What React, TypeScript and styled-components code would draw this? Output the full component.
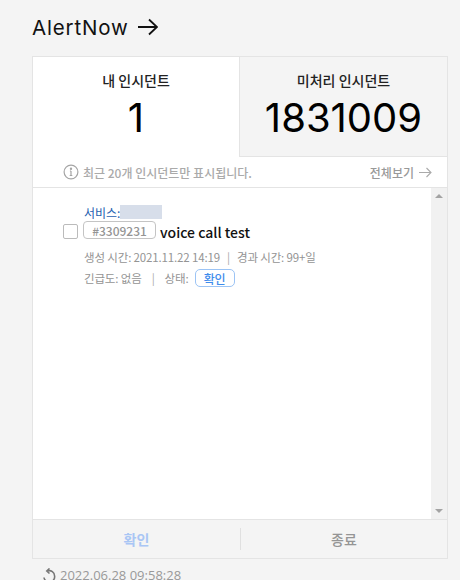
import React from "react";
import styled, { createGlobalStyle } from "styled-components";

const GlobalStyle = createGlobalStyle`
  html, body {
    margin: 0;
    padding: 0;
    height: 580px;
    overflow: hidden;
    background: #f4f4f4;
    font-family: "Noto Sans CJK KR", "Noto Sans", sans-serif;
  }
`;

const Page = styled.div`
  width: 416px;
  height: 580px;
  padding: 0 12px 0 32px;
  overflow: hidden;
`;

const Title = styled.h2`
  display: flex;
  align-items: center;
  gap: 8px;
  height: 56px;
  margin: 0;
  padding-bottom: 2px;
  box-sizing: border-box;
  font-family: Inter, sans-serif;
  font-size: 20.5px;
  font-weight: 400;
  letter-spacing: 0.85px;
  color: #111;
`;

const Card = styled.div`
  height: 503px;
  box-sizing: border-box;
  border: 1px solid #e4e4e4;
  display: flex;
  flex-direction: column;
  background: #fff;
`;

const Tabs = styled.div`
  display: grid;
  grid-template-columns: 206px 1fr;
  height: 100px;
`;

const Tab = styled.div<{ $active?: boolean }>`
  display: flex;
  flex-direction: column;
  align-items: center;
  padding-top: 12px;
  box-sizing: border-box;
  background: ${(p) => (p.$active ? "#fff" : "#f4f4f4")};
  border-left: ${(p) => (p.$active ? "none" : "1px solid #e4e4e4")};
  border-bottom: ${(p) => (p.$active ? "none" : "1px solid #e4e4e4")};
`;

const TabLabel = styled.div`
  font-size: 14px;
  line-height: 22px;
  font-weight: 500;
  color: #222;
`;

const TabCount = styled.div`
  font-family: Inter, sans-serif;
  font-size: 40px;
  line-height: 46px;
  margin-top: 4px;
  font-weight: 400;
  color: #000;
`;

const Notice = styled.div`
  display: flex;
  align-items: center;
  justify-content: space-between;
  height: 31px;
  box-sizing: border-box;
  padding: 0 15px 0 30px;
  border-bottom: 1px solid #e4e4e4;
  font-size: 12px;
  font-weight: 500;
  color: #aaa;
`;

const NoticeText = styled.span`
  display: flex;
  align-items: center;
  gap: 4px;
`;

const ViewAll = styled.span`
  display: flex;
  align-items: center;
  gap: 5px;
  color: #999;
`;

const ListArea = styled.div`
  flex: 1;
  display: flex;
  min-height: 0;
`;

const List = styled.div`
  flex: 1;
  padding: 15px 0 0 30px;
`;

const ServiceLine = styled.div`
  display: flex;
  align-items: center;
  margin-left: 21px;
  height: 18px;
  font-size: 12px;
  color: #1f5fb0;
`;

const Redacted = styled.span`
  display: inline-block;
  width: 42px;
  height: 14px;
  background: #d7deea;
`;

const HeadRow = styled.div`
  display: flex;
  align-items: center;
  height: 20px;
  margin-top: -1px;
`;

const Check = styled.span`
  box-sizing: border-box;
  width: 15px;
  height: 15px;
  border: 1px solid #bbb;
  border-radius: 2px;
  margin-right: 5px;
  margin-top: 3px;
  background: #fff;
`;

const IdBadge = styled.span`
  display: inline-flex;
  align-items: center;
  justify-content: center;
  box-sizing: border-box;
  width: 73px;
  height: 18px;
  border: 1px solid #c4c4c4;
  border-radius: 4px;
  font-size: 12px;
  font-weight: 500;
  color: #949494;
`;

const IncidentTitle = styled.span`
  margin-left: 4px;
  margin-top: 3px;
  font-size: 14px;
  font-weight: 500;
  color: #111;
`;

const Meta = styled.div<{ $top: number }>`
  display: flex;
  align-items: center;
  margin: ${(p) => p.$top}px 0 0 21px;
  height: 20px;
  font-size: 11.5px;
  letter-spacing: -0.15px;
  color: #949494;
`;

const Sep = styled.span<{ $gap: number }>`
  margin: 0 ${(p) => p.$gap}px;
  color: #aaa;
`;

const StatusBadge = styled.span`
  display: inline-flex;
  align-items: center;
  justify-content: center;
  box-sizing: border-box;
  width: 40px;
  height: 18px;
  margin-left: 6px;
  border: 1px solid #9cc4f5;
  border-radius: 5px;
  font-size: 12px;
  font-weight: 500;
  color: #3f8cec;
`;

const Scrollbar = styled.div`
  width: 16px;
  background: #f1f1f1;
  display: flex;
  flex-direction: column;
  justify-content: space-between;
  align-items: center;
  padding: 6px 0;
  box-sizing: border-box;
`;

const Arrow = styled.span<{ $down?: boolean }>`
  width: 0;
  height: 0;
  border-left: 4px solid transparent;
  border-right: 4px solid transparent;
  ${(p) =>
    p.$down ? "border-top: 4px solid #a3a3a3;" : "border-bottom: 4px solid #a3a3a3;"}
`;

const Footer = styled.div`
  height: 39px;
  box-sizing: border-box;
  border-top: 1px solid #e4e4e4;
  background: #f4f4f4;
  display: grid;
  grid-template-columns: 1fr 1fr;
  align-items: center;
`;

const FooterButton = styled.button<{ $primary?: boolean; $divider?: boolean }>`
  height: 22px;
  padding: 0;
  border: none;
  border-left: ${(p) => (p.$divider ? "1px solid #e0e0e0" : "none")};
  background: none;
  font-family: inherit;
  font-size: 14px;
  font-weight: ${(p) => (p.$primary ? 700 : 500)};
  color: ${(p) => (p.$primary ? "#a9c6f5" : "#959595")};
`;

const Updated = styled.div`
  display: flex;
  align-items: center;
  gap: 3px;
  margin: 7px 0 0 10px;
  font-family: "Open Sans", sans-serif;
  font-size: 13px;
  line-height: 18px;
  color: #999;
`;

export default function App() {
  return (
    <>
      <GlobalStyle />
      <Page>
        <Title>
          AlertNow
          <svg width="21" height="18" viewBox="0 0 21 18" fill="none" stroke="#111" strokeWidth="1.8">
            <path d="M1 9h19M12 1.5 20 9l-8 7.5" />
          </svg>
        </Title>
        <Card>
          <Tabs>
            <Tab $active>
              <TabLabel>내 인시던트</TabLabel>
              <TabCount>1</TabCount>
            </Tab>
            <Tab>
              <TabLabel>미처리 인시던트</TabLabel>
              <TabCount>1831009</TabCount>
            </Tab>
          </Tabs>
          <Notice>
            <NoticeText>
              <svg width="16" height="16" viewBox="0 0 16 16" fill="none" stroke="#a5a5a5" strokeWidth="1.2">
                <circle cx="8" cy="8" r="6.9" />
                <path d="M8 7v4.5M6.7 11.5h2.6M6.9 7H8" />
                <circle cx="8" cy="4.7" r="0.6" fill="#a5a5a5" />
              </svg>
              최근 20개 인시던트만 표시됩니다.
            </NoticeText>
            <ViewAll>
              전체보기
              <svg width="13" height="11" viewBox="0 0 13 11" fill="none" stroke="#aaa" strokeWidth="1.1">
                <path d="M0 5.5h12M7.5 1 12 5.5 7.5 10" />
              </svg>
            </ViewAll>
          </Notice>
          <ListArea>
            <List>
              <ServiceLine>
                서비스:
                <Redacted />
              </ServiceLine>
              <HeadRow>
                <Check />
                <IdBadge>#3309231</IdBadge>
                <IncidentTitle>voice call test</IncidentTitle>
              </HeadRow>
              <Meta $top={7}>
                생성 시간: 2021.11.22 14:19
                <Sep $gap={7}>|</Sep>
                경과 시간: 99+일
              </Meta>
              <Meta $top={1}>
                긴급도: 없음
                <Sep $gap={10}>|</Sep>
                상태:
                <StatusBadge>확인</StatusBadge>
              </Meta>
            </List>
            <Scrollbar>
              <Arrow />
              <Arrow $down />
            </Scrollbar>
          </ListArea>
          <Footer>
            <FooterButton $primary>확인</FooterButton>
            <FooterButton $divider>종료</FooterButton>
          </Footer>
        </Card>
        <Updated>
          <svg width="15" height="14" viewBox="0 0 15 14" fill="none" stroke="#777" strokeWidth="1.6">
            <path d="M2 9.5A5.3 5.3 0 0 0 12.6 8 5.3 5.3 0 0 0 5.5 3" />
            <path d="M7.5 0.5 4.8 3l2.7 2.5" />
          </svg>
          2022.06.28 09:58:28
        </Updated>
      </Page>
    </>
  );
}
